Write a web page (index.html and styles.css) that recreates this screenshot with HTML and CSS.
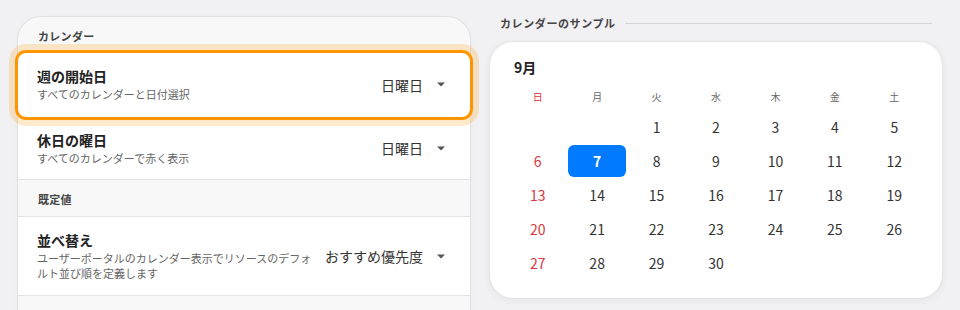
FILE: index.html
```html
<!DOCTYPE html>
<html lang="ja">
<head>
<meta charset="utf-8">
<title>カレンダー設定</title>
<link rel="stylesheet" href="styles.css">
</head>
<body>
<div class="page">
  <div class="settings">
    <div class="group-head first">カレンダー</div>
    <div class="row focused">
      <div class="text">
        <div class="title">週の開始日</div>
        <div class="sub">すべてのカレンダーと日付選択</div>
      </div>
      <div class="value">日曜日<svg class="caret" width="8" height="5" viewBox="0 0 8 5"><path d="M0 0.5h8L4 4.5z"/></svg></div>
    </div>
    <div class="row">
      <div class="text">
        <div class="title">休日の曜日</div>
        <div class="sub">すべてのカレンダーで赤く表示</div>
      </div>
      <div class="value">日曜日<svg class="caret" width="8" height="5" viewBox="0 0 8 5"><path d="M0 0.5h8L4 4.5z"/></svg></div>
    </div>
    <div class="group-head">既定値</div>
    <div class="row">
      <div class="text">
        <div class="title">並べ替え</div>
        <div class="sub">ユーザーポータルのカレンダー表示でリソースのデフォルト並び順を定義します</div>
      </div>
      <div class="value">おすすめ優先度<svg class="caret" width="8" height="5" viewBox="0 0 8 5"><path d="M0 0.5h8L4 4.5z"/></svg></div>
    </div>
    <div class="group-head empty"></div>
  </div>

  <div class="preview">
    <div class="preview-head"><span>カレンダーのサンプル</span><span class="rule"></span></div>
    <div class="cal">
      <div class="month">9月</div>
      <div class="weekdays">
        <span class="sun">日</span><span>月</span><span>火</span><span>水</span><span>木</span><span>金</span><span>土</span>
      </div>
      <div class="days">
        <span></span><span></span><span>1</span><span>2</span><span>3</span><span>4</span><span>5</span>
        <span class="sun">6</span><span class="sel">7</span><span>8</span><span>9</span><span>10</span><span>11</span><span>12</span>
        <span class="sun">13</span><span>14</span><span>15</span><span>16</span><span>17</span><span>18</span><span>19</span>
        <span class="sun">20</span><span>21</span><span>22</span><span>23</span><span>24</span><span>25</span><span>26</span>
        <span class="sun">27</span><span>28</span><span>29</span><span>30</span><span></span><span></span><span></span>
      </div>
    </div>
  </div>
</div>
</body>
</html>
```

FILE: styles.css
```css
html, body {
  margin: 0;
  padding: 0;
  height: 310px;
  overflow: hidden;
  background: #f1f1f3;
  font-family: "Noto Sans CJK JP", "Noto Sans", sans-serif;
  color: #222;
}

.page {
  display: grid;
  grid-template-columns: 454px 454px;
  column-gap: 18px;
  padding: 16px 17px 0;
  align-items: start;
}

/* ---------- settings panel ---------- */
.settings {
  background: #f8f8f8;
  border: 1px solid #e2e2e2;
  border-bottom: none;
  border-radius: 24px 24px 0 0;
  box-shadow: 0 1px 4px rgba(0, 0, 0, 0.03);
}

.group-head {
  padding: 13px 20px 10px;
  font-size: 11px;
  line-height: 13px;
  font-weight: 700;
  color: #444;
  letter-spacing: 0.3px;
  border-bottom: 1px solid #e3e3e3;
}

.group-head.first {
  padding-bottom: 9px;
}

.group-head.empty {
  height: 40px;
  border-bottom: none;
}

.row {
  display: flex;
  align-items: center;
  background: #fff;
  padding: 14px 25px 13.5px 19px;
  border-bottom: 1px solid #e3e3e3;
}

.row.focused {
  position: relative;
  z-index: 1;
  border-radius: 8px;
  border-bottom-color: transparent;
  outline: 3px solid #ff9500;
  box-shadow: 0 0 0 9px rgba(255, 149, 0, 0.2);
}

.text {
  flex: 0 1 280px;
  min-width: 0;
}

.title {
  font-size: 14px;
  line-height: 18px;
  font-weight: 700;
  color: #222;
}

.sub {
  margin-top: 2px;
  font-size: 11px;
  line-height: 15px;
  color: #666;
}

.value {
  margin-left: auto;
  display: flex;
  align-items: center;
  gap: 14px;
  font-size: 14px;
  line-height: 18px;
  color: #333;
  white-space: nowrap;
}

.caret {
  display: block;
  fill: #555;
}

/* ---------- preview ---------- */
.preview {
  margin-top: -1px;
}

.preview-head {
  display: flex;
  align-items: center;
  padding: 0 11px;
  font-size: 11px;
  line-height: 16px;
  font-weight: 700;
  color: #444;
  letter-spacing: 0.6px;
}

.rule {
  flex: 1;
  height: 1px;
  background: #d4d4d4;
  margin-left: 9px;
}

.cal {
  margin-top: 10px;
  background: #fff;
  border: 1px solid #e4e4e4;
  border-radius: 24px;
  box-shadow: 0 2px 8px rgba(0, 0, 0, 0.05);
  padding: 16px 19px 19px;
}

.month {
  margin-left: 5px;
  font-size: 14px;
  line-height: 18px;
  font-weight: 700;
  color: #222;
}

.weekdays,
.days {
  display: grid;
  grid-template-columns: repeat(7, 1fr);
  column-gap: 2px;
  text-align: center;
}

.weekdays {
  margin-top: 11px;
  margin-bottom: 4px;
  font-size: 10px;
  line-height: 20px;
  color: #666;
}

.days {
  row-gap: 2px;
  font-size: 14px;
  color: #333;
}

.days span {
  height: 32px;
  line-height: 32px;
}

.sun {
  color: #d9363e !important;
}

.days .sel {
  background: #007aff;
  color: #fff;
  font-weight: 700;
  border-radius: 6px;
}
```
